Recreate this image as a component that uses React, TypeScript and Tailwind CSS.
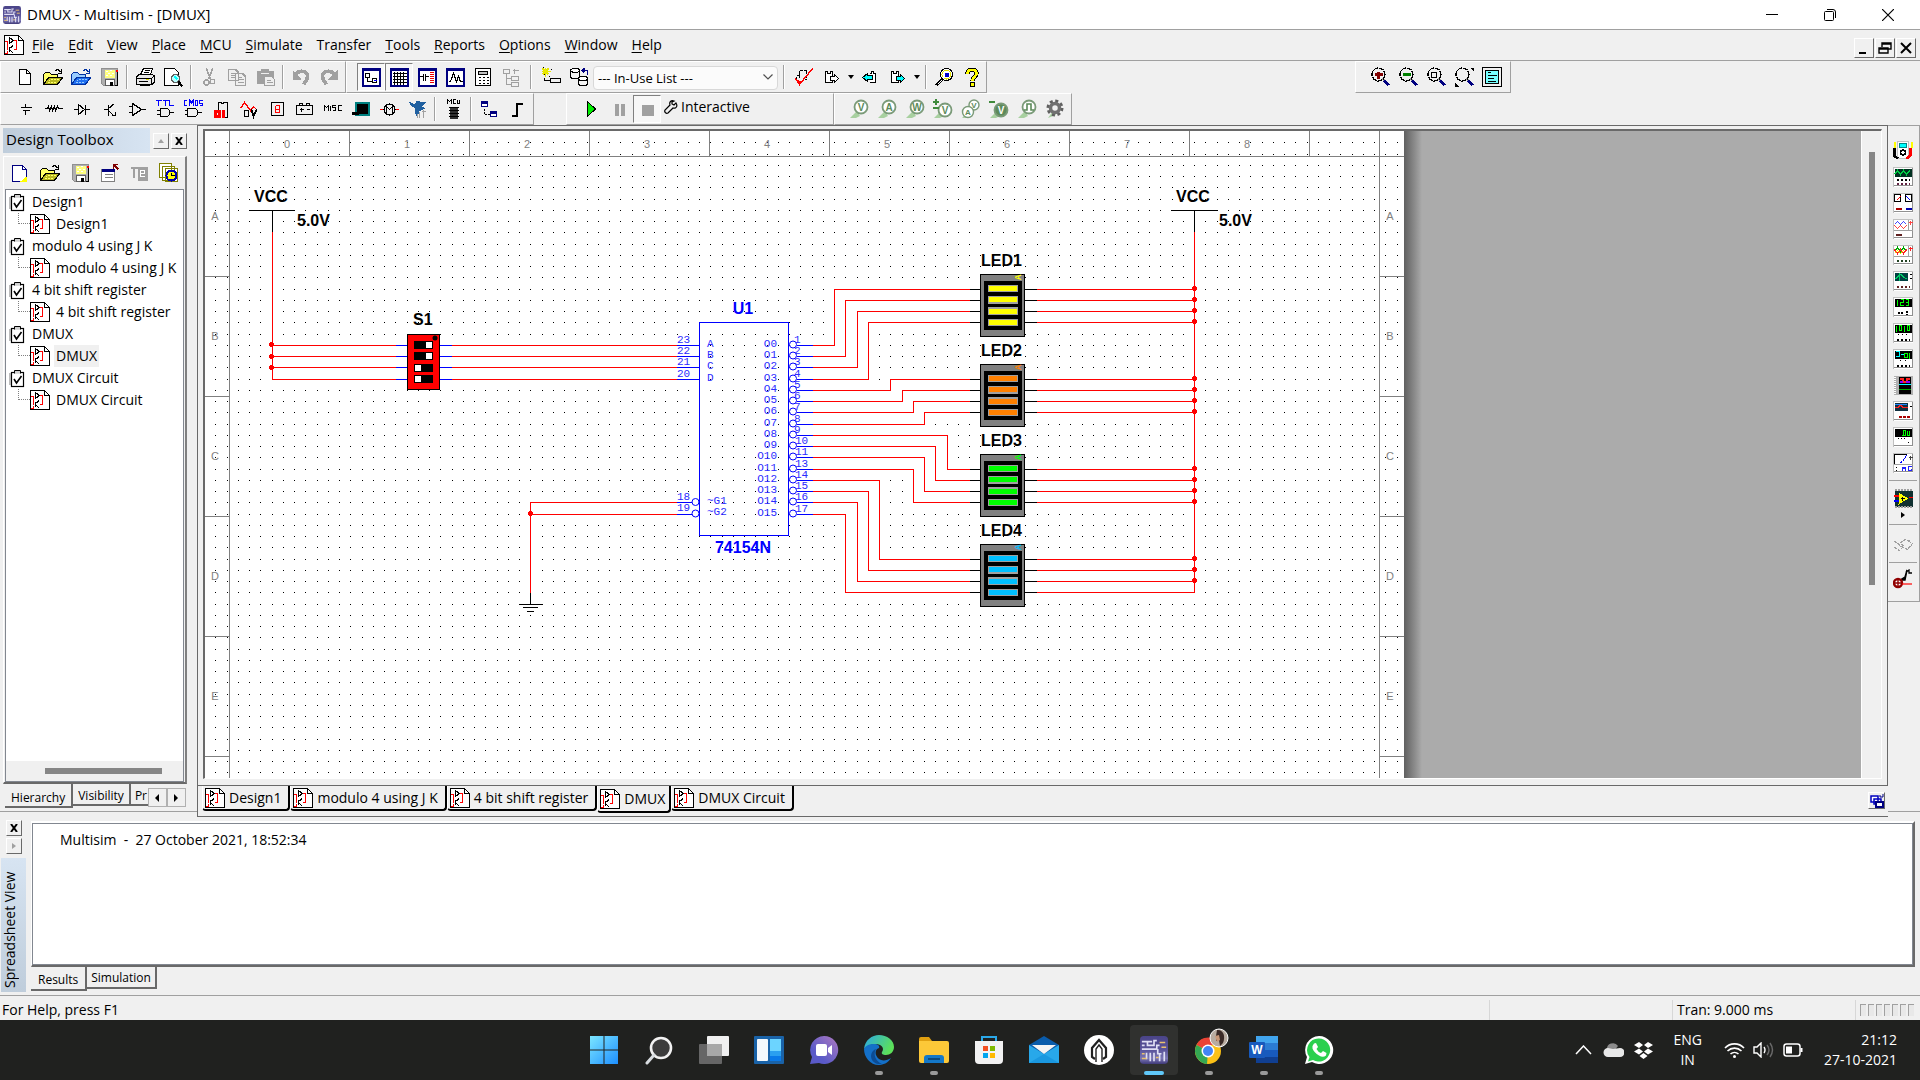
import React from "react";

type Kids = { children?: React.ReactNode };

/* ---------- small building blocks ---------- */

/* Strokes are shifted by half a unit so that thin lines fill whole pixels. */
function Ico({ children, smooth = false }: Kids & { smooth?: boolean }) {
  return (
    <svg
      width="20"
      height="20"
      viewBox="0 0 20 20"
      fill="none"
      aria-hidden="true"
      shapeRendering={smooth ? "auto" : "crispEdges"}
      className="shrink-0"
    >
      {smooth ? children : <g transform="translate(0.5 0.5)">{children}</g>}
    </svg>
  );
}

function Tool({ label, children, pressed = false }: Kids & { label: string; pressed?: boolean }) {
  return (
    <button
      type="button"
      aria-label={label}
      className={
        pressed
          ? "flex h-7 w-7 shrink-0 items-center justify-center border border-t-[#808080] border-l-[#808080] border-r-white border-b-white bg-[#f7f7f7]"
          : "flex h-7 w-7 shrink-0 items-center justify-center"
      }
    >
      {children}
    </button>
  );
}

function Sep({ wide = false }: { wide?: boolean }) {
  return (
    <span
      className={
        wide
          ? "mx-[5px] h-6 w-[2px] shrink-0 border-r border-l border-r-white border-l-[#a0a0a0]"
          : "mx-[3px] h-6 w-[2px] shrink-0 border-r border-l border-r-white border-l-[#a0a0a0]"
      }
    />
  );
}

function Bar({ children, label, className }: Kids & { label: string; className: string }) {
  return (
    <div
      role="toolbar"
      aria-label={label}
      className={`flex h-8 shrink-0 items-center border border-t-white border-r-[#a0a0a0] border-b-[#a0a0a0] border-l-white ${className}`}
    >
      {children}
    </div>
  );
}

/* ---------- icons ---------- */

const SheetIcon = () => (
  <Ico>
    <path d="M0 0h14l5 5v14H0z" fill="#fff" stroke="#000" />
    <path d="M14 0v5h5" stroke="#000" />
    <path d="M0 6h3v8M0 18h3v-3M8 5h4v9H9" stroke="#f00" strokeWidth="1.4" />
    <path d="M5 2v6l4-3zM5 11v5M5 13l4-3M5 14l4 4" stroke="#000" strokeWidth="1.2" />
  </Ico>
);

const ClipIcon = () => (
  <svg width="16" height="19" viewBox="0 0 16 19" fill="none" aria-hidden="true" className="shrink-0">
    <rect x="2.5" y="3.5" width="12" height="14" fill="#fff" stroke="#000" strokeWidth="1.2" />
    <path d="M1 4v12" stroke="#a0a0a0" strokeWidth="1.4" />
    <path d="M5.5 4.500V1.500h6v3" fill="#d0d0d0" stroke="#000" />
    <path d="M5 10l2.500 4 5-7" stroke="#000" strokeWidth="1.6" />
  </svg>
);

const NewIcon = () => (
  <Ico>
    <path d="M4 2h7l4 4v11H4z" fill="#fff" stroke="#000" strokeWidth="1.2" />
    <path d="M11 2v4h4" stroke="#000" strokeWidth="1.2" />
  </Ico>
);
const OpenIcon = ({ a = "#ffff66", b = "#b8b820", line = "#000" }: { a?: string; b?: string; line?: string }) => (
  <Ico>
    <path d="M0 17V7l2-2h4l2 2h6v3" fill={a} stroke={line} strokeWidth="1.2" />
    <path d="M0 17l5-7h14l-5 7z" fill={b} stroke={line} strokeWidth="1.2" />
    <path d="M5 14l2-2h9M4 15h9" stroke={a} strokeDasharray="2 1" />
    <path d="M11 4c2-3 5-2 6 1M18 1v5h-4" stroke={line} strokeWidth="1.2" />
  </Ico>
);
const SaveIcon = () => (
  <Ico>
    <path d="M2 1h16v17H4l-2-2z" fill="#b0b0b0" stroke="#909090" />
    <path d="M18 3v15H5" stroke="#000" strokeWidth="1.4" />
    <rect x="5" y="2" width="10" height="8" fill="#ffff80" />
    <path d="M6 4h2M10 3h2M8 6h2M12 6h2M6 8h2M10 8h2" stroke="#fff" strokeWidth="1.4" />
    <rect x="6" y="12" width="9" height="6" fill="#fff" stroke="#606060" />
    <rect x="10" y="14" width="3" height="4" fill="#000" />
    <rect x="16" y="2" width="2" height="2" fill="#f00" />
  </Ico>
);
const PrintIcon = () => (
  <Ico>
    <path d="M5 7l3-6h9l-2 6z" fill="#fff" stroke="#000" strokeWidth="1.2" />
    <path d="M9 3h5M8 5h5" stroke="#000" />
    <path d="M1 9l3-2h13l2 2v6l-3 2H1z" fill="#e8e8e8" stroke="#000" strokeWidth="1.3" />
    <path d="M1 11h15v6M16 11l3-3M3 14h9" stroke="#000" strokeWidth="1.2" />
    <path d="M4 18h10l2-2" stroke="#000" strokeWidth="1.4" />
    <path d="M10 12h3" stroke="#e0e000" strokeWidth="1.6" />
  </Ico>
);
const PreviewIcon = () => (
  <Ico>
    <path d="M1 1h10l4 4v13H1z" fill="#fff" stroke="#000" strokeWidth="1.2" />
    <circle cx="12" cy="11" r="4" fill="#bff" stroke="#606060" strokeWidth="1.4" />
    <path d="M11 9l3 3" stroke="#0ff" strokeWidth="1.5" />
    <path d="M15 14l4 5" stroke="#000" strokeWidth="2.2" />
  </Ico>
);
const CutIcon = () => (
  <Ico>
    <path d="M7 1l4 11M13 1L9 12" stroke="#a0a0a0" strokeWidth="1.6" />
    <circle cx="7" cy="15" r="2.5" stroke="#a0a0a0" strokeWidth="1.4" />
    <circle cx="13" cy="14" r="2.3" stroke="#a0a0a0" strokeWidth="1.4" />
  </Ico>
);
const CopyIcon = () => (
  <Ico>
    <path d="M1 2h7l3 3v8H1zM8 6h7l3 3v9H8z" fill="#efefef" stroke="#a0a0a0" strokeWidth="1.5" />
    <path d="M3 6h4M3 8h4M3 10h4M10 10h4M10 12h6M10 15h6" stroke="#a0a0a0" strokeWidth="1.2" />
  </Ico>
);
const PasteIcon = () => (
  <Ico>
    <path d="M1 3h17v13H1z" fill="#a0a0a0" />
    <path d="M6 4V2h6v2" stroke="#a0a0a0" strokeWidth="2" />
    <path d="M5 6h8" stroke="#efefef" strokeWidth="1.4" />
    <path d="M9 9h7l3 3v6H9z" fill="#efefef" stroke="#a0a0a0" strokeWidth="1.4" />
    <path d="M11 13h4M11 15h6" stroke="#a0a0a0" />
  </Ico>
);
const UndoIcon = () => (
  <Ico>
    <path d="M4 7c4-5 12-4 12 2 0 4-3 6-4 8" stroke="#a0a0a0" strokeWidth="3.6" />
    <path d="M1 2v10h9z" fill="#a0a0a0" />
  </Ico>
);
const RedoIcon = () => (
  <Ico>
    <path d="M15 7C11 2 3 3 3 9c0 4 3 6 4 8" stroke="#a0a0a0" strokeWidth="3.6" />
    <path d="M18 2v10H9z" fill="#a0a0a0" />
  </Ico>
);
const NavyWin = ({ children }: Kids) => (
  <Ico>
    <rect x="1" y="1" width="17" height="17" fill="#fff" stroke="#000080" strokeWidth="2" />
    <path d="M0 2h19" stroke="#000080" strokeWidth="3" />
    {children}
  </Ico>
);
const ListDesign = () => (
  <NavyWin>
    <path d="M4 6h4v4H4zM11 11h4v4h-4zM6 10v4h5" stroke="#000" strokeWidth="1.3" />
    <path d="M12 13h3" stroke="#00f" strokeWidth="1.4" />
  </NavyWin>
);
const GridWin = () => (
  <NavyWin>
    <path d="M3 6h14M3 9h14M3 12h14M3 15h14M5 4v13M8 4v13M11 4v13M14 4v13" stroke="#000" />
  </NavyWin>
);
const CapWin = () => (
  <NavyWin>
    <path d="M2 9h4M6 6v7M8 6v7M8 9h3" stroke="#000" strokeWidth="1.3" />
    <path d="M12 5h4M12 7h4M12 9h4M12 11h4M12 13h4M12 15h4" stroke="#e00" />
  </NavyWin>
);
const WaveWin = () => (
  <NavyWin>
    <path d="M3 14h2l3-8 3 8 2-5 2 5h2" stroke="#000" strokeWidth="1.2" />
  </NavyWin>
);
const CalcIcon = () => (
  <Ico>
    <path d="M2 1h15v17H2z" fill="#fff" stroke="#000" strokeWidth="1.6" />
    <path d="M5 4h9v3H5z" fill="#c0c0c0" stroke="#000" />
    <path d="M5 10h11M5 13h11M5 16h11" stroke="#000" strokeWidth="1.4" strokeDasharray="2 2" />
  </Ico>
);
const TreeGray = () => (
  <Ico>
    <path d="M2 2h6v4H2zM10 9h7v4h-7zM10 15h7v4h-7zM5 6v11h5M5 11h5M13 1v5M11 3h6" stroke="#a0a0a0" strokeWidth="1.5" />
  </Ico>
);
const CompWizard = () => (
  <Ico>
    <path d="M4 0v9M0 4h9M1 1l6 6M7 1L1 7" stroke="#e8e800" strokeWidth="1.6" />
    <path d="M3 10v3h5M9 11h10v4H9z" stroke="#000" strokeWidth="1.4" />
    <path d="M2 7h1M7 9h1M9 2h1M1 0h1" stroke="#000" />
  </Ico>
);
const DbIcon = () => (
  <Ico>
    <path d="M1 3v6c0 3 9 3 9 0V3" fill="#f4f4f4" stroke="#000" strokeWidth="1.2" />
    <ellipse cx="5.5" cy="3" rx="4.5" ry="2" fill="#fff" stroke="#000" strokeWidth="1.2" />
    <path d="M9 11v5c0 3 9 3 9 0v-5" fill="#f4f4f4" stroke="#000" strokeWidth="1.2" />
    <ellipse cx="13.5" cy="11" rx="4.5" ry="2" fill="#fff" stroke="#000" strokeWidth="1.2" />
    <path d="M13 3h5v4M15 1l-2 2 2 2" stroke="#000080" strokeWidth="1.5" />
  </Ico>
);
const ErcIcon = () => (
  <Ico>
    <path d="M2 12V8h3V3h8M5 3v7M12 3v9H9" stroke="#000" strokeWidth="1.3" strokeDasharray="3 1" />
    <path d="M1 11l4 6L18 1" stroke="#f00" strokeWidth="1.4" />
    <path d="M2 12l3 6 4-5-3 1z" fill="#f00" />
  </Ico>
);
const FwdIcon = ({ c = "#fff", flip = false }: { c?: string; flip?: boolean }) => (
  <Ico>
    {flip ? (
      <>
        <path d="M9 6h2V4h2v2h2v9H9" fill="#fff" stroke="#000" strokeWidth="1.2" />
        <path d="M2 10l5-4v2h5v4H7v2z" fill={c} stroke="#000" strokeWidth="1.2" />
      </>
    ) : (
      <>
        <path d="M3 4h2v2h3V4h2v11H3z" fill="#fff" stroke="#000" strokeWidth="1.2" />
        <path d="M16 11l-4-4v2H8v4h4v2z" fill={c} stroke="#000" strokeWidth="1.2" />
      </>
    )}
  </Ico>
);
const Caret = () => (
  <svg width="7" height="4" viewBox="0 0 7 4" aria-hidden="true">
    <path d="M0 0h6L3 4z" fill="#000" />
  </svg>
);
const FindIcon = () => (
  <Ico>
    <circle cx="12" cy="7" r="6" fill="#fff" stroke="#000" strokeWidth="1.2" />
    <circle cx="12" cy="7" r="4.5" stroke="#e0e000" />
    <path d="M10 5h4v4h-4z" fill="#00c" />
    <path d="M8 11l-6 7" stroke="#000" strokeWidth="3" />
    <path d="M7 13l-4 4" stroke="#fff" />
  </Ico>
);
const HelpIcon = () => (
  <Ico>
    <path d="M5 6c0-5 9-5 9 0 0 3-4 4-4 7" stroke="#000" strokeWidth="4.5" />
    <path d="M5 6c0-5 9-5 9 0 0 3-4 4-4 7" stroke="#ff0" strokeWidth="2.6" />
    <rect x="8" y="15" width="4" height="4" fill="#ff0" stroke="#000" />
  </Ico>
);

const K = "#000";
const parts: { name: string; icon: React.ReactNode }[] = [
  { name: "Source", icon: <path d="M10 4v4M5 8h11M7 11h7M10 11v4" stroke={K} strokeWidth="1.2" /> },
  { name: "Basic", icon: <path d="M1 9h3l1-2 1 4 2-4 1 4 2-4 1 4 2-4 1 2h4" stroke={K} /> },
  { name: "Diode", icon: <path d="M2 10h5M14 10h4M7 5v10l6-5zM14 5v10" stroke={K} strokeWidth="1.2" /> },
  { name: "Transistor", icon: <path d="M4 10h5M9 5v11M9 9l6-5M9 11l6 6M12 16h4v-4" stroke={K} strokeWidth="1.2" /> },
  { name: "Analog", icon: <path d="M5 4v12l9-6zM1 7h4M1 13h4M14 10h4" stroke={K} strokeWidth="1.2" /> },
  {
    name: "TTL",
    icon: (
      <>
        <path d="M0 1h6M3 1v5M7 1h6M10 1v5M14 0v6h4" stroke="#00f" strokeWidth="1.8" />
        <path d="M5 9v8h6c4 0 4-8 0-8zM1 11h4M1 15h4M14 13h4" stroke={K} strokeWidth="1.2" />
      </>
    ),
  },
  {
    name: "CMOS",
    icon: (
      <>
        <path d="M3 1H1v5h2M6 6V1l2 2 2-2v5M12 1h2v5h-2zM19 1h-3v3h3v2h-3" stroke="#00f" strokeWidth="1.6" />
        <path d="M4 9v8h7c4 0 4-8 0-8zM1 11h3M1 15h3M14 13h4" stroke={K} strokeWidth="1.2" />
      </>
    ),
  },
  {
    name: "Misc Digital",
    icon: (
      <>
        <path d="M7 10V3h3v1h2V3h4v15h-4" stroke={K} strokeWidth="1.2" />
        <path d="M4 12h4v5H4zM12 10v8" stroke="#f00" strokeWidth="2.6" />
      </>
    ),
  },
  {
    name: "Mixed",
    icon: (
      <>
        <path d="M1 9l4-6 6 8 3-4 4 4" stroke="#f00" strokeWidth="1.3" />
        <path d="M5 11h4v6H5zM12 10l2 7 3-7" stroke={K} strokeWidth="1.8" />
      </>
    ),
  },
  {
    name: "Indicator",
    icon: (
      <>
        <rect x="4" y="3" width="12" height="13" stroke={K} strokeWidth="1.2" />
        <path d="M8 6h4v7H8M8 6v7M8 10h4" stroke="#f00" strokeWidth="1.5" />
      </>
    ),
  },
  { name: "Power", icon: <path d="M1 6h16v9H1zM4 6V4h3v2M11 6V4h3v2M4 10h4M6 8v4M11 10h3" stroke={K} strokeWidth="1.2" /> },
  {
    name: "Misc",
    icon: <path d="M1 11V6l2 2 2-2v5M7 6v5M12 6H9v2h3v3H9M18 6h-3v5h3" stroke={K} />,
  },
  {
    name: "Advanced Peripherals",
    icon: (
      <>
        <rect x="4" y="3" width="13" height="12" fill="#000" stroke="#008080" strokeWidth="2" />
        <path d="M0 14h7" stroke={K} strokeWidth="3" />
      </>
    ),
  },
  {
    name: "Electromechanical",
    icon: (
      <>
        <path d="M0 10h4M16 10h4" stroke="#f00" strokeWidth="1.4" />
        <circle cx="10" cy="10" r="5.5" stroke={K} strokeWidth="1.2" />
        <path d="M7 13V7l3 3 3-3v6" stroke={K} strokeWidth="1.2" />
      </>
    ),
  },
  {
    name: "NI Component",
    icon: (
      <>
        <path d="M1 2l6 3 2-4 3 1h7l-4 5 2 2-5 3-2 6-3-5 1-4-5-3z" fill="#2060a0" />
        <path d="M12 12v6M14 12h4M16 10v8M10 18v-4" stroke="#a0a0a0" strokeWidth="1.5" />
      </>
    ),
  },
];

const probes = ["V", "A", "W", "±", "AV", "−", "π"];

function ProbeIcon({ kind }: { kind: string }) {
  const dark = kind === "−";
  const low = kind === "±" || dark;
  const letter = low ? "V" : kind;
  return (
    <Ico smooth>
      <path d="M1 19l7-7 3 5-4 2z" fill="#a8d0a0" />
      {kind === "AV" ? (
        <>
          <circle cx="13" cy="6" r="5" fill="#fff" stroke="#7a9a78" strokeWidth="1.4" />
          <text x="13" y="9" fontSize="8" fontWeight="bold" textAnchor="middle" fill="#5c8a5a" fontFamily="Liberation Sans">V</text>
          <circle cx="7" cy="13" r="5.5" fill="#fff" stroke="#7a9a78" strokeWidth="1.4" />
          <text x="7" y="16" fontSize="8" fontWeight="bold" textAnchor="middle" fill="#5c8a5a" fontFamily="Liberation Sans">A</text>
        </>
      ) : (
        <>
          <circle cx="12" cy={low ? 11 : 8} r="6.5" fill={dark ? "#5c8a5a" : "#fff"} stroke="#7a9a78" strokeWidth="1.8" />
          {kind === "π" ? (
            <path d="M7 11h3V5h4v6h3" stroke="#5c8a5a" strokeWidth="1.6" />
          ) : (
            <text x="12" y={low ? 15 : 12} fontSize="10" fontWeight="bold" textAnchor="middle" fill={dark ? "#fff" : "#5c8a5a"} fontFamily="Liberation Sans">
              {letter}
            </text>
          )}
          {kind === "±" && <path d="M3 0v6M0 3h6M0 9h6" stroke="#3f8a3c" strokeWidth="2" />}
          {dark && <path d="M0 3h6" stroke="#3f8a3c" strokeWidth="2" />}
        </>
      )}
    </Ico>
  );
}

function ZoomIcon({ kind }: { kind: "in" | "out" | "area" | "fit" }) {
  return (
    <Ico>
      <path d="M12 11l4 4" stroke="#a0a0a0" strokeWidth="2" />
      <circle cx="8" cy="7" r="6.5" stroke="#000" strokeWidth="1.3" strokeDasharray="5 1" />
      <path d="M14 13l4 5" stroke="#000080" strokeWidth="3" />
      {kind === "in" && <path d="M8 4v7M4 7h8" stroke="#800000" strokeWidth="3" />}
      {kind === "out" && <path d="M4 7h8" stroke="#008000" strokeWidth="3" />}
      {kind === "area" && <rect x="5" y="5" width="5" height="5" stroke="#000" strokeWidth="1.2" />}
      {kind === "fit" && <path d="M15 0h4v4zM0 15v4h4z" fill="#000" />}
    </Ico>
  );
}

/* ---------- top of the window ---------- */

const menus: [string, string, string][] = [
  ["", "F", "ile"],
  ["", "E", "dit"],
  ["", "V", "iew"],
  ["", "P", "lace"],
  ["", "M", "CU"],
  ["", "S", "imulate"],
  ["Tra", "n", "sfer"],
  ["", "T", "ools"],
  ["", "R", "eports"],
  ["", "O", "ptions"],
  ["", "W", "indow"],
  ["", "H", "elp"],
];

function MultisimLogo({ size }: { size: number }) {
  return (
    <svg width={size} height={size} viewBox="0 0 30 30" aria-hidden="true" className="shrink-0">
      <defs>
        <linearGradient id="logo-fill" x1="0" y1="0" x2="0" y2="1">
          <stop offset="0" stopColor="#4a4488" />
          <stop offset="0.5" stopColor="#5a549a" />
          <stop offset="0.8" stopColor="#7a76b4" />
          <stop offset="1" stopColor="#403a78" />
        </linearGradient>
      </defs>
      <rect width="30" height="30" rx="4" fill="url(#logo-fill)" />
      <path
        d="M2 6h11M8 6v4h7V5h3M2 14h16M18 14v-4h3M7 18v7M11 18v9M15 18v9M19 14v5h4M21 19v8M26 17v10M2 10h3"
        fill="none"
        stroke="#e0e0f4"
        strokeWidth="1.8"
      />
      <path d="M21 7h6M23 12h5M2 19h3M2 24h5M17 23h3" fill="none" stroke="#e8c070" strokeWidth="1.6" />
    </svg>
  );
}

function TitleBar() {
  return (
    <header className="flex h-[30px] shrink-0 items-center border-b border-[#a0a0a0] bg-white pr-[26px] pl-[3px]">
      <MultisimLogo size={18} />
      <h1 className="ml-1.5 flex-1 pb-0.5 text-[15px] leading-5">DMUX - Multisim - [DMUX]</h1>
      <div className="flex items-center gap-[46px]">
        <button type="button" aria-label="Minimize" className="h-3 w-3">
          <svg width="12" height="12" viewBox="0 0 12 12"><path d="M0 5.500h12" stroke="#000" /></svg>
        </button>
        <button type="button" aria-label="Restore" className="h-3 w-3">
          <svg width="12" height="12" viewBox="0 0 12 12" fill="none">
            <rect x="0.5" y="2.5" width="9" height="9" rx="1" stroke="#000" />
            <path d="M3 .5h6q2.500 0 2.500 2.500v6" stroke="#000" />
          </svg>
        </button>
        <button type="button" aria-label="Close" className="h-3 w-3">
          <svg width="12" height="12" viewBox="0 0 12 12"><path d="M0 0l12 12M12 0L0 12" stroke="#000" strokeWidth="1.2" /></svg>
        </button>
      </div>
    </header>
  );
}

function MdiButton({ label, children }: Kids & { label: string }) {
  return (
    <button
      type="button"
      aria-label={label}
      className="flex h-5 w-5 items-center justify-center border border-t-white border-r-[#696969] border-b-[#696969] border-l-white bg-[#f0f0f0]"
    >
      <svg width="14" height="14" viewBox="0 0 14 14" fill="none" aria-hidden="true">{children}</svg>
    </button>
  );
}

function MenuBar() {
  return (
    <nav className="flex h-[31px] shrink-0 items-center border-b border-[#a0a0a0] pr-1 pl-1" aria-label="Main menu">
      <SheetIcon />
      <ul className="ml-px flex flex-1 pb-0.5">
        {menus.map(([a, u, b]) => (
          <li key={a + u + b}>
            <button type="button" className="px-[7px] text-sm leading-5">
              {a}
              <span className="underline underline-offset-2">{u}</span>
              {b}
            </button>
          </li>
        ))}
      </ul>
      <div className="flex gap-px pt-[5px]">
        <MdiButton label="Minimize document"><path d="M2 12h7" stroke="#000" strokeWidth="2" /></MdiButton>
        <MdiButton label="Restore document">
          <path d="M4 6V2h9v6h-3M4 3h9M1 7h9v5H1zM1 8h9" stroke="#000" strokeWidth="1.4" />
        </MdiButton>
        <MdiButton label="Close document"><path d="M2 2l10 10M12 2L2 12" stroke="#000" strokeWidth="2" /></MdiButton>
      </div>
    </nav>
  );
}

function ToolbarRowOne() {
  return (
    <div className="flex h-8 shrink-0">
      <Bar label="Standard" className="pl-2.5 pr-0.5">
        <Tool label="New"><NewIcon /></Tool>
        <Tool label="Open"><OpenIcon /></Tool>
        <Tool label="Open sample"><OpenIcon a="#9cf" b="#2070f0" line="#0030a0" /></Tool>
        <Tool label="Save"><SaveIcon /></Tool>
        <Sep />
        <Tool label="Print"><PrintIcon /></Tool>
        <Tool label="Print preview"><PreviewIcon /></Tool>
        <Sep />
        <Tool label="Cut"><CutIcon /></Tool>
        <Tool label="Copy"><CopyIcon /></Tool>
        <Tool label="Paste"><PasteIcon /></Tool>
        <Sep />
        <Tool label="Undo"><UndoIcon /></Tool>
        <Tool label="Redo"><RedoIcon /></Tool>
      </Bar>
      <Bar label="Main" className="pl-2.5">
        <Tool label="Design toolbox" pressed><ListDesign /></Tool>
        <Tool label="Spreadsheet view" pressed><GridWin /></Tool>
        <Tool label="SPICE netlist viewer"><CapWin /></Tool>
        <Tool label="Grapher"><WaveWin /></Tool>
        <Tool label="Postprocessor"><CalcIcon /></Tool>
        <Tool label="Parent sheet"><TreeGray /></Tool>
        <Sep wide />
        <Tool label="Component wizard"><CompWizard /></Tool>
        <Tool label="Database manager"><DbIcon /></Tool>
        <div className="relative">
          <select aria-label="In-use list" className="h-6 w-[185px] appearance-none rounded-sm border border-[#d8d8d8] bg-[#fbfbfb] pl-1 text-[13px] leading-5">
            <option>--- In-Use List ---</option>
          </select>
          <svg width="10" height="6" viewBox="0 0 10 6" className="pointer-events-none absolute top-[9px] right-[5px]" fill="none">
            <path d="M0.500 .5L5 5l4.500-4.500" stroke="#505050" strokeWidth="1.2" />
          </svg>
        </div>
        <Sep wide />
        <Tool label="Electrical rules check"><ErcIcon /></Tool>
        <Tool label="Transfer to board"><FwdIcon /></Tool>
        <button type="button" aria-label="Transfer options" className="flex w-2.5 justify-center"><Caret /></button>
        <Tool label="Back annotate"><FwdIcon c="#0ff" flip /></Tool>
        <Tool label="Forward annotate"><FwdIcon c="#0ff" /></Tool>
        <button type="button" aria-label="Annotate options" className="flex w-2.5 justify-center"><Caret /></button>
        <Sep />
        <Tool label="Find examples"><FindIcon /></Tool>
        <Tool label="Help"><HelpIcon /></Tool>
      </Bar>
      <div className="min-w-0 flex-1" />
      <Bar label="View" className="mr-[409px] pr-1 pl-2.5">
        <Tool label="Zoom in"><ZoomIcon kind="in" /></Tool>
        <Tool label="Zoom out"><ZoomIcon kind="out" /></Tool>
        <Tool label="Zoom area"><ZoomIcon kind="area" /></Tool>
        <Tool label="Zoom to fit"><ZoomIcon kind="fit" /></Tool>
        <Tool label="Full screen">
          <Ico>
            <rect x="0" y="0" width="19" height="19" fill="#f0f0f0" stroke="#000" strokeWidth="1.2" />
            <rect x="3" y="3" width="13" height="13" fill="#7ff" stroke="#000" strokeWidth="1.2" />
            <path d="M5 5h3M5 8h9M5 11h6M5 14h8" stroke="#000" />
          </Ico>
        </Tool>
      </Bar>
    </div>
  );
}

function ToolbarRowTwo() {
  return (
    <div className="flex h-8 shrink-0">
      <Bar label="Components" className="pl-2.5 pr-0.5">
        {parts.map((p) => (
          <Tool key={p.name} label={p.name}><Ico>{p.icon}</Ico></Tool>
        ))}
        <Sep />
        <Tool label="MCU">
          <Ico>
            <path d="M4 0v4M4 0l2 2 2-2v4M12 0h-2v4h2M14 0v4h2V0" stroke="#000" />
            <rect x="6" y="7" width="8" height="12" fill="#303030" />
            <path d="M5 8h10M5 11h10M5 14h10M5 17h10" stroke="#000" strokeWidth="1.3" />
          </Ico>
        </Tool>
        <Sep />
        <Tool label="Hierarchical block">
          <Ico>
            <path d="M2 2h6v5H2zM11 12h6v5h-6z" fill="#fff" stroke="#000080" strokeWidth="1.3" />
            <path d="M2 3h6M11 13h6" stroke="#000080" strokeWidth="2.4" />
            <path d="M5 9v6h5" stroke="#000" strokeWidth="1.4" strokeDasharray="2 1" />
          </Ico>
        </Tool>
        <Tool label="Bus"><Ico><path d="M4 16h5V4h6" stroke="#000" strokeWidth="2" /></Ico></Tool>
      </Bar>
      <Bar label="Simulation" className="ml-8 w-[268px] pl-2.5">
        <Tool label="Run"><Ico><path d="M6 2v15l8-7.500z" fill="#0e0" stroke="#000" strokeWidth="1" /></Ico></Tool>
        <Tool label="Pause"><Ico><path d="M5 4h4v12H5zM11 4h4v12h-4z" fill="#a0a0a0" /></Ico></Tool>
        <Tool label="Stop" pressed><Ico><rect x="4" y="5" width="12" height="11" fill="#a0a0a0" /></Ico></Tool>
        <button type="button" className="ml-[3px] flex items-center gap-[3px] pb-1 text-sm leading-5">
          <svg width="14" height="14" viewBox="0 0 14 14" fill="none" aria-hidden="true">
            <path d="M12 3l-2 2-2-1V2l2-1C7 0 5 2 6 5L1 10c-1 2 1 4 3 3l5-5c3 1 5-2 3-5z" stroke="#000" strokeWidth="1.2" />
          </svg>
          Interactive
        </button>
      </Bar>
      <Bar label="Probes" className="pr-0.5 pl-2.5">
        {probes.map((k) => (
          <Tool key={k} label={`Probe ${k}`}><ProbeIcon kind={k} /></Tool>
        ))}
        <Tool label="Probe settings">
          <Ico smooth>
            <path d="M3 19l5-7 3 4z" fill="#a8d0a0" />
            <circle cx="10" cy="9" r="7" stroke="#606060" strokeWidth="3" strokeDasharray="3 2.5" />
            <circle cx="10" cy="9" r="4.5" stroke="#707070" strokeWidth="3.5" />
          </Ico>
        </Tool>
      </Bar>
    </div>
  );
}

/* ---------- design toolbox ---------- */

const designs = ["Design1", "modulo 4 using J K", "4 bit shift register", "DMUX", "DMUX Circuit"];

function TinyButton({ label, children }: Kids & { label: string }) {
  return (
    <button
      type="button"
      aria-label={label}
      className="flex h-4 w-4 shrink-0 items-center justify-center border border-t-white border-r-[#696969] border-b-[#696969] border-l-white bg-[#f0f0f0]"
    >
      {children}
    </button>
  );
}

const CrossMark = () => (
  <svg width="8" height="8" viewBox="0 0 8 8" aria-hidden="true"><path d="M1 0l6 8M7 0L1 8" stroke="#000" strokeWidth="2" /></svg>
);

function DesignToolbox() {
  return (
    <aside className="mb-[5px] flex w-[197px] shrink-0 flex-col border-b border-[#a0a0a0] pt-[3px] pr-[10px] pl-[3px]">
      <div className="flex items-center gap-0.5">
        <h2 className="mr-px h-[25px] w-[147px] bg-linear-to-r from-[#bfcddb] to-[#d7e4f2] pl-[3px] text-[15px] leading-[23px]">Design Toolbox</h2>
        <TinyButton label="Pin"><svg width="6" height="4" viewBox="0 0 6 4"><path d="M0 4h6L3 0z" fill="#a0a0a0" /></svg></TinyButton>
        <TinyButton label="Close toolbox"><CrossMark /></TinyButton>
      </div>
      <div className="mt-[3px] flex flex-1 flex-col border-t border-r-2 border-b-2 border-l border-t-white border-r-[#808080] border-b-[#696969] border-l-white">
        <div className="flex h-8 items-center justify-between px-1.5">
          <button type="button" aria-label="New design">
            <Ico>
              <path d="M2 2h10l4 4v12H2z" fill="#fff" stroke="#000080" strokeWidth="1.2" />
              <path d="M12 2v4h4" stroke="#000080" /><path d="M10 18h6v-5z" fill="#ff0" />
            </Ico>
          </button>
          <button type="button" aria-label="Open design"><OpenIcon /></button>
          <button type="button" aria-label="Save design"><SaveIcon /></button>
          <button type="button" aria-label="Close design">
            <Ico>
              <rect x="2" y="6" width="13" height="12" fill="#fff" stroke="#808080" />
              <path d="M2 7h13" stroke="#000080" strokeWidth="3" />
              <path d="M5 11h8M5 14h8" stroke="#808080" />
              <path d="M14 1h4M14 1v4M14 1l5 5" stroke="#800000" strokeWidth="1.5" />
            </Ico>
          </button>
          <button type="button" aria-label="Rename">
            <Ico>
              <path d="M1 4h7M4 4v10" stroke="#a0a0a0" strokeWidth="2" />
              <rect x="8" y="3" width="10" height="14" fill="#a0a0a0" />
              <path d="M10 10h5V7h-4v6h4" stroke="#fff" />
            </Ico>
          </button>
          <button type="button" aria-label="Version history">
            <Ico>
              <path d="M0 0h12v14H0zM3 3h12v14H3zM6 5h12v13H6z" fill="#fff" stroke="#808000" strokeWidth="1.2" />
              <circle cx="12" cy="12" r="5" fill="#ff0" stroke="#00a" strokeWidth="2" />
              <path d="M12 9v3h3" stroke="#000" strokeWidth="1.2" />
            </Ico>
          </button>
        </div>
        <div className="mx-px flex flex-1 flex-col border border-[#828790] bg-white">
          <ul className="flex-1 overflow-hidden pt-px text-sm leading-[22px] whitespace-nowrap">
            {designs.map((d) => (
              <li key={d}>
                <div className="flex h-[22px] items-center gap-[7px] pl-[3px]"><ClipIcon />{d}</div>
                <div className="flex h-[22px] items-center pl-3">
                  <span className="-mt-[11px] h-[11px] w-3 shrink-0 border-b border-l border-dotted border-[#808080]" />
                  <SheetIcon />
                  <span className={d === "DMUX" ? "ml-1 bg-[#f0f0f0] px-0.5" : "ml-1 px-0.5"}>{d}</span>
                </div>
              </li>
            ))}
          </ul>
          <div className="h-5 bg-[#f0f0f0] pt-[7px] pl-[39px]"><div className="h-1.5 w-[117px] bg-[#868686]" /></div>
        </div>
      </div>
      <div className="flex h-[27px] items-start pl-0.5 text-xs leading-[18px]">
        <button type="button" className="h-6 border-r-2 border-b-2 border-[#696969] px-1.5 pt-[5px]">Hierarchy</button>
        <button type="button" className="h-[22px] border-r-2 border-b-2 border-[#696969] px-[5px] pt-[3px]">Visibility</button>
        <button type="button" className="h-[22px] w-[17px] overflow-hidden border-b-2 border-[#696969] pt-[3px] pl-1 text-left">Pr</button>
        <button type="button" aria-label="Scroll tabs left" className="mt-1 flex h-[19px] w-[19px] items-center justify-center border border-[#b0b0b0]">
          <svg width="4" height="8" viewBox="0 0 4 8"><path d="M4 0v8L0 4z" /></svg>
        </button>
        <button type="button" aria-label="Scroll tabs right" className="mt-1 flex h-[19px] w-[19px] items-center justify-center border border-[#b0b0b0]">
          <svg width="4" height="8" viewBox="0 0 4 8"><path d="M0 0v8l4-4z" /></svg>
        </button>
      </div>
    </aside>
  );
}

/* ---------- schematic ---------- */

/* The drawing uses window-like coordinates, so the view box starts at (205, 131). */
function dotPath() {
  let d = "";
  for (let i = 19; i < 125; i++) {
    for (let j = 12; j < 69; j++) {
      d += `M${Math.floor(2.1 + i * 11.25)} ${Math.floor(7.8 + j * 11.25)}h1v1h-1z`;
    }
  }
  return d;
}

const pinY = (n: number) => Math.floor(345.3 + n * 11.25);
const outPins = [1, 2, 3, 4, 5, 6, 7, 8, 9, 10, 11, 13, 14, 15, 16, 17];
const bendX = [834, 845, 857, 868, 890, 902, 913, 924, 947, 935, 924, 913, 879, 868, 857, 845];
const leds = [
  { name: "LED1", y: 274, color: "#ffff00" },
  { name: "LED2", y: 364, color: "#ff8000" },
  { name: "LED3", y: 454, color: "#00ff00" },
  { name: "LED4", y: 544, color: "#00bfff" },
];
const ledWire = [15, 26, 37, 48];
const cells = [
  [11, 7, 12],
  [22, 8, 23],
  [33, 8, 35],
  [45, 7, 46],
];

function Node({ x, y }: { x: number; y: number }) {
  return <path d={`M${x - 1} ${y - 3}h3v1h1v3h-1v1h-3v-1h-1v-3h1z`} fill="#f00" />;
}

function Vcc({ x }: { x: number }) {
  return (
    <g>
      <path d={`M${x - 23} 210.500h46M${x + 0.5} 210v22`} stroke="#000" />
      <text x={x - 18} y="202" fontSize="16" fontWeight="bold">VCC</text>
      <text x={x + 25} y="226" fontSize="16" fontWeight="bold">5.0V</text>
    </g>
  );
}

function Schematic() {
  const cols = Array.from({ length: 10 }, (_, i) => 229 + i * 120);
  const rows = Array.from({ length: 5 }, (_, i) => 276 + i * 120);
  return (
    <svg width="1199" height="647" viewBox="205 131 1199 647" fill="none" className="shrink-0 bg-white" fontFamily="'Liberation Sans', sans-serif" role="img" aria-label="Demultiplexer schematic">
      <path d={dotPath()} fill="#000" shapeRendering="crispEdges" />
      <g stroke="#808080" shapeRendering="crispEdges">
        <path d="M229.500 131v647M1379.500 131v647M205 156.500h1199" />
        {cols.map((x) => <path key={x} d={`M${x + 0.5} 131v25`} />)}
        {rows.map((y) => <path key={y} d={`M205 ${y + 0.5}h24M1379 ${y + 0.5}h25`} />)}
      </g>
      <g fill="#808080" fontSize="11" textAnchor="middle">
        {cols.slice(0, 9).map((x, i) => <text key={x} x={x + 58} y="148">{i}</text>)}
        {["A", "B", "C", "D", "E"].map((c, i) => (
          <React.Fragment key={c}>
            <text x="215" y={220 + i * 120}>{c}</text>
            <text x="1390" y={220 + i * 120}>{c}</text>
          </React.Fragment>
        ))}
      </g>

      <g shapeRendering="crispEdges">
        {[0, 1, 2, 3].map((i) => (
          <g key={i}>
            <path d={`M272 ${pinY(i) + 0.5}h124M452 ${pinY(i) + 0.5}h225`} stroke="#f00" />
            <path d={`M396 ${pinY(i) + 0.5}h11M440 ${pinY(i) + 0.5}h12M677 ${pinY(i) + 0.5}h22`} stroke="#00f" />
          </g>
        ))}
        <path d="M272.500 232v148M530.500 502v91M530 502.500h147M530 514.500h147M1194.500 232v361" stroke="#f00" />
        <path d="M677 502.500h15M677 514.500h15" stroke="#00f" />
        {outPins.map((p, i) => (
          <g key={p}>
            <path d={`M797 ${pinY(i) + 0.5}h16`} stroke="#00f" />
            <path d={`M813 ${pinY(i) + 0.5}H${bendX[i] + 0.5}V${leds[i >> 2].y + ledWire[i % 4] + 0.5}H970`} stroke="#f00" />
          </g>
        ))}
        {leds.map((l, n) =>
          ledWire.map((w, k) => (
            <g key={l.name + w}>
              <path d={`M970 ${l.y + w + 0.5}h10M1025 ${l.y + w + 0.5}h12`} stroke="#000" />
              <path d={`M1037 ${l.y + w + 0.5}h157`} stroke="#f00" />
              {!(n === 3 && k === 3) && <Node x={1194} y={l.y + w} />}
            </g>
          )),
        )}
        <Node x={271} y={345} />
        <Node x={271} y={357} />
        <Node x={271} y={368} />
        <Node x={530} y={514} />
        <path d="M530.500 593v11M519 604.500h24M523 607.500h15M527 611.500h7" stroke="#000" />
        <rect x="699.5" y="322.5" width="89" height="213" stroke="#00f" />
        <rect x="407.5" y="334.5" width="32" height="55" fill="#f00" stroke="#000" />
        {[341, 352, 364, 375].map((y, i) => (
          <g key={y}>
            <rect x="414" y={y} width="19" height="8" fill="#000" />
            <rect x={i < 2 ? 426 : 415} y={y + 1} width="6" height="6" fill="#fff" />
          </g>
        ))}
        {leds.map((l) => (
          <g key={l.name}>
            <rect x="980.5" y={l.y + 0.5} width="44" height="62" fill="#808080" stroke="#000" />
            <rect x="984" y={l.y + 7} width="38" height="49" fill="#000" />
            {cells.map(([y, h, c]) => (
              <g key={y}>
                <rect x="988" y={l.y + y} width="30" height={h} fill="#a0a0a0" />
                <rect x="989" y={l.y + c} width="28" height="5" fill={l.color} />
              </g>
            ))}
          </g>
        ))}
      </g>
      <circle cx="435" cy="338" r="2.5" fill="#000" />

      <g fill="#000">
        <Vcc x={272} />
        <Vcc x={1194} />
        <text x="413" y="325" fontSize="16" fontWeight="bold">S1</text>
        {leds.map((l) => (
          <React.Fragment key={l.name}>
            <text x="981" y={l.y - 8} fontSize="16" fontWeight="bold">{l.name}</text>
            <text transform={`translate(1021 ${l.y + 6}) rotate(-90)`} fontSize="9" fontWeight="bold" fill={l.color} fontFamily="'Liberation Mono', monospace">A</text>
          </React.Fragment>
        ))}
      </g>

      <g fill="#00f" fontSize="16" fontWeight="bold" textAnchor="middle">
        <text x="743" y="314">U1</text>
        <text x="743" y="553">74154N</text>
      </g>
      <g fill="#2a2aff" fontSize="11" fontFamily="'Liberation Mono', monospace">
        {["A", "B", "C", "D"].map((c, i) => (
          <React.Fragment key={c}>
            <text x="707" y={pinY(i) + 2}>{c}</text>
            <text x="677" y={pinY(i) - 2}>{23 - i}</text>
          </React.Fragment>
        ))}
        <text x="677" y="500">18</text>
        <text x="677" y="511">19</text>
        <text x="707" y="504">~G1</text>
        <text x="707" y="515">~G2</text>
        {outPins.map((p, i) => (
          <React.Fragment key={p}>
            <text x="777" y={pinY(i) + 2} textAnchor="end">{`O${i}`}</text>
            <text x={p < 10 ? 794 : 795} y={pinY(i) - 2}>{p}</text>
          </React.Fragment>
        ))}
      </g>
      <g fill="#fff" stroke="#00f">
        {outPins.map((p, i) => <circle key={p} cx="793" cy={pinY(i) - 0.5} r="3.5" />)}
        <circle cx="695.5" cy="502" r="3.5" />
        <circle cx="695.5" cy="513.5" r="3.5" />
      </g>
    </svg>
  );
}

function DocumentArea() {
  return (
    <main className="flex min-w-0 flex-1 flex-col border-l border-[#696969]">
      <div className="flex min-h-0 flex-1 border-t border-r border-b border-[#696969] pt-[3px] pr-[5px] pb-1.5 pl-[5px]">
        <div className="flex min-w-0 flex-1 border-t-2 border-r border-b border-l-2 border-t-[#696969] border-r-white border-b-white border-l-[#696969] bg-[#ababab]">
          <div className="min-w-0 flex-1 overflow-hidden">
            <div className="flex h-0 min-h-full">
              <Schematic />
              <div className="w-[18px] shrink-0 bg-linear-to-r from-[#606060] to-[#ababab]" />
            </div>
          </div>
          <div className="w-5 shrink-0 border-l border-white bg-[#f0f0f0] pt-[21px] pl-[7px]"><div className="h-[433px] w-1.5 bg-[#868686]" /></div>
        </div>
      </div>
      <div className="flex h-[31px] shrink-0 items-start border-b border-[#696969] pr-[3px] pl-1 text-sm">
        {designs.map((d) => (
          <button
            key={d}
            type="button"
            className={
              d === "DMUX"
                ? "flex h-[27px] items-center gap-1 rounded-b-sm border-r-2 border-b-2 border-l border-black border-l-white pr-1 pl-0.5 leading-5"
                : "flex h-[25px] items-center gap-1 rounded-b-sm border-r-2 border-b-2 border-l border-black border-l-white pr-[7px] pl-0.5 leading-5"
            }
          >
            <SheetIcon />
            {d}
          </button>
        ))}
        <div className="flex-1" />
        <button type="button" aria-label="Window list" className="mt-1.5 flex h-[17px] w-[17px] items-center justify-center border border-t-white border-r-[#696969] border-b-[#696969] border-l-white">
          <svg width="14" height="14" viewBox="0 0 14 14" fill="none" aria-hidden="true">
            <path d="M1 2h7v6H1zM4 5h7v5H4z" fill="#fff" stroke="#0000c0" strokeWidth="1.5" />
            <path d="M6 8h7v5H6z" fill="#fff" stroke="#000080" strokeWidth="2" />
            <path d="M10 1v2h3V0" stroke="#000080" />
          </svg>
        </button>
      </div>
    </main>
  );
}

/* ---------- instruments ---------- */

const Panel = ({ children, screen }: Kids & { screen: React.ReactNode }) => (
  <Ico>
    <path d="M0 0h19v19H0z" fill="#fff" />
    <path d="M0 19V0h19" stroke="#c0c0c0" />
    <path d="M19 0v18H0" stroke="#909090" />
    {screen}
    {children}
  </Ico>
);
const Leads = ({ c = "#000", y = 15 }: { c?: string; y?: number }) => (
  <path d={`M3 ${y}h13`} stroke={c} strokeWidth="2" strokeDasharray="2 2" />
);
const Screen = ({ w = 16, fill = "#000" }: { w?: number; fill?: string }) => <rect x="1" y="1" width={w} height="8" fill={fill} />;

const instruments: { name: string; icon: React.ReactNode }[] = [
  {
    name: "Multimeter",
    icon: (
      <Ico>
        <rect x="4" y="0" width="11" height="17" fill="#fff" stroke="#c0c0c0" />
        <rect x="6" y="2" width="7" height="4" fill="#0ff" stroke="#088" />
        <circle cx="9.5" cy="11" r="2.5" stroke="#000" strokeWidth="1.4" />
        <path d="M1 0v6" stroke="#ff0" strokeWidth="2" /><path d="M1 6v9l4 2" stroke="#000" strokeWidth="2.2" />
        <path d="M18 0v6" stroke="#ff0" strokeWidth="2" /><path d="M17 6v8l-4 3" stroke="#f00" strokeWidth="2.6" />
      </Ico>
    ),
  },
  { name: "Function generator", icon: <Panel screen={<><Screen w={17} fill="#003020" /><path d="M1 7l3-4 3 4 3-4 3 4 3-4" stroke="#0c4" strokeWidth="1.5" /></>}><Leads y={12} /><Leads y={16} c="#602040" /></Panel> },
  { name: "Wattmeter", icon: <Panel screen={<><path d="M1 1h6v7H1zM12 1h6v7h-6z" stroke="#000" strokeWidth="1.4" /><path d="M3 7l4-4" stroke="#f00" /><path d="M13 3l4 4" stroke="#00f" /></>}><path d="M2 15h6" stroke="#a00" strokeWidth="2" /><path d="M12 15h6" stroke="#00a" strokeWidth="2" /></Panel> },
  { name: "Oscilloscope", icon: <Panel screen={<><path d="M1 5l3-3 3 3 3-3 3 3" stroke="#44f" /><path d="M1 6l3 3 3-3 3 3 3-3M15 3h4M17 1v4" stroke="#f44" /><path d="M0 11h19M15 0v11" stroke="#a0a0a0" /></>}><path d="M2 15h6" stroke="#602020" strokeWidth="2" /></Panel> },
  { name: "Four channel oscilloscope", icon: <Panel screen={<><path d="M1 6l3-4 3 4 3-4 3 4" stroke="#0a0" strokeWidth="1.4" /><path d="M1 4l3 4 3-4 3 4 3-4M15 3h4M17 1v4" stroke="#f22" strokeWidth="1.4" /><path d="M1 8l3-3 3 3 3-3" stroke="#ee0" /><path d="M0 11h19M15 0v11" stroke="#a0a0a0" /></>}><Leads c="#204020" /></Panel> },
  { name: "Bode plotter", icon: <Panel screen={<><Screen w={13} fill="#004040" /><path d="M1 7c4 0 4-4 6-4s3 4 6 4M6 1v8" stroke="#0c6" strokeWidth="1.2" /><path d="M16 3h2M16 7h2" stroke="#000" strokeWidth="1.5" /></>}><Leads c="#602020" /></Panel> },
  { name: "Frequency counter", icon: <Panel screen={<><Screen w={17} /><path d="M4 2v6M7 2h3v3H7v3h3M12 2h3v6h-3M12 5h3" stroke="#0f0" /></>}><path d="M4 15h6M13 13v4" stroke="#000" strokeWidth="2" strokeDasharray="2 1" /></Panel> },
  { name: "Word generator", icon: <Panel screen={<><Screen w={17} /><path d="M3 2v6M6 2h2v5H6zM11 2v6M14 2h2v5h-2z" stroke="#0f0" /></>}><path d="M4 11h12" stroke="#000" strokeDasharray="1 3" /><Leads y={16} /></Panel> },
  { name: "Logic converter", icon: <Panel screen={<><Screen w={17} /><path d="M2 2h4v5H2M7 5h3" stroke="#0ff" strokeWidth="1.4" /><path d="M11 4h3v4h-3zM16 3v6" stroke="#0f0" /></>}><path d="M6 11h8" stroke="#000" strokeDasharray="1 4" /><Leads y={16} /></Panel> },
  { name: "Logic analyzer", icon: <Ico><rect x="0" y="0" width="19" height="19" fill="#b0b0b0" /><rect x="5" y="1" width="12" height="17" fill="#000" /><path d="M1 1v17" stroke="#fff" strokeWidth="2" strokeDasharray="1 1" /><path d="M6 3h3v3h4V3h3" stroke="#f22" strokeWidth="2" /><path d="M6 6h3M12 6h4" stroke="#80f" strokeWidth="2" /><path d="M5 9h12" stroke="#0ff" /><path d="M5 14h12" stroke="#0a0" /></Ico> },
  { name: "IV analyzer", icon: <Panel screen={<><Screen w={13} fill="#103040" /><path d="M1 6h3l3-2 3 2h4" stroke="#f22" strokeWidth="1.4" /><path d="M1 3h12" stroke="#28f" /><path d="M16 5h2" stroke="#000" strokeWidth="1.5" /></>}><path d="M5 15h11" stroke="#a00" strokeWidth="2" strokeDasharray="3 1" /></Panel> },
  { name: "Distortion analyzer", icon: <Panel screen={<><Screen w={17} /><path d="M8 8h1M10 3h2v5h-2zM14 3v5h2V3" stroke="#0f0" /></>}><path d="M4 11h9M15 14v3" stroke="#000" strokeWidth="1.2" strokeDasharray="1 2" /></Panel> },
  { name: "Network analyzer", icon: <Panel screen={<><path d="M1 10V1h12" stroke="#000" strokeWidth="1.4" /><path d="M7 9l2-1 4-6" stroke="#00f" /><path d="M15 4h4M17 2v4" stroke="#404040" /><path d="M0 11h19" stroke="#a0a0a0" /></>}><path d="M9 17v-3h3v3M9 15h3M18 13h-3v4h3v-2" stroke="#22f" /><path d="M3 13v4" stroke="#000" strokeDasharray="1 2" /></Panel> },
];

function Instruments() {
  return (
    <div className="mb-[5px] flex w-8 shrink-0 flex-col border-b border-[#a0a0a0]">
      <div role="toolbar" aria-label="Instruments" className="flex flex-col items-center border-t border-r border-b border-[#a0a0a0] pt-3 pr-0.5 pb-1.5">
        {instruments.map((i) => (
          <button key={i.name} type="button" aria-label={i.name} className="flex h-[26px] items-center">{i.icon}</button>
        ))}
        <hr className="my-1 w-7 border-[#a0a0a0]" />
        <button type="button" aria-label="LabVIEW instruments" className="flex h-[25px] items-center">
          <Ico>
            <rect x="1" y="2" width="18" height="16" fill="#103030" />
            <path d="M1 1h18M1 18h18" stroke="#a0a0a0" strokeWidth="2" strokeDasharray="2 1" />
            <path d="M0 7h5" stroke="#f00" strokeWidth="2" /><path d="M0 12h5" stroke="#00f" strokeWidth="2" />
            <path d="M5 4v12l10-6z" fill="#ff0" /><path d="M15 9h5" stroke="#f00" /><path d="M7 10h4M9 8v4" stroke="#000" />
          </Ico>
        </button>
        <button type="button" aria-label="More instruments" className="my-0.5 px-2">
          <svg width="4" height="6" viewBox="0 0 4 6"><path d="M0 0v6l4-3z" /></svg>
        </button>
        <hr className="mt-1 w-7 border-[#a0a0a0]" />
        <button type="button" aria-label="NI ELVIS" className="flex h-[37px] items-center">
          <Ico><path d="M1 13l5 3 4-4-3-4 5-3 6 2M8 12l6 3 5-6-5-3M4 9l4 3M1 7l4 2" stroke="#a0a0a0" strokeWidth="1.2" strokeDasharray="3 1" /></Ico>
        </button>
        <hr className="w-7 border-[#a0a0a0]" />
        <button type="button" aria-label="Current clamp" className="flex h-8 items-center">
          <Ico smooth>
            <path d="M7 11l5-3 2-7-2 10z" fill="#000" stroke="#000" strokeWidth="1.4" />
            <path d="M13 3l3-2v3h3" stroke="#000" strokeWidth="1.3" />
            <circle cx="5" cy="14" r="4" stroke="#900000" strokeWidth="2.4" fill="#fff" />
            <path d="M5 11v6M2 14h6" stroke="#900000" strokeWidth="1.4" /><path d="M9 15h10" stroke="#f00" strokeWidth="1.2" />
          </Ico>
        </button>
      </div>
    </div>
  );
}

/* ---------- spreadsheet view and status ---------- */

function SpreadsheetView() {
  return (
    <section aria-label="Spreadsheet view" className="flex h-[179px] shrink-0 border-b border-[#a0a0a0] pt-[3px] pr-[5px]">
      <div className="flex w-[31px] shrink-0 flex-col items-center gap-0.5 pr-1">
        <TinyButton label="Close spreadsheet view"><CrossMark /></TinyButton>
        <TinyButton label="Pin spreadsheet view"><svg width="4" height="6" viewBox="0 0 4 6"><path d="M0 0v6l4-3z" fill="#a0a0a0" /></svg></TinyButton>
        <div className="mt-0.5 h-[134px] w-[25px] bg-linear-to-b from-[#d7e4f2] to-[#bfcddb]">
          <h2 className="h-full w-full rotate-180 pt-1 text-sm leading-[18px] whitespace-nowrap [writing-mode:vertical-rl]">Spreadsheet View</h2>
        </div>
      </div>
      <div className="flex flex-1 flex-col pt-px">
        <div className="flex-1 border-t-2 border-r-2 border-b-2 border-l border-t-white border-r-[#696969] border-b-[#696969] border-l-white">
          <div className="h-full border border-[#828790] bg-white pt-1.5 pl-[27px] text-sm leading-5 whitespace-pre">{"Multisim  -  27 October 2021, 18:52:34"}</div>
        </div>
        <div className="flex h-7 items-start text-xs leading-[18px]">
          <button type="button" className="h-6 border-r-2 border-b-2 border-[#696969] px-[7px] pt-1">Results</button>
          <button type="button" className="h-[22px] border-r-2 border-b-2 border-[#696969] px-1 pt-0.5">Simulation</button>
        </div>
      </div>
    </section>
  );
}

function StatusBar() {
  return (
    <footer className="flex h-6 shrink-0 items-end text-sm leading-5">
      <span className="flex-1 pl-0.5">For Help, press F1</span>
      <span className="h-5 w-[183px] border-l border-[#d7d7d7]" />
      <span className="h-5 w-[183px] border-l border-[#d7d7d7] pl-1">Tran: 9.000 ms</span>
      <span className="flex h-5 w-[65px] items-center gap-0.5 border-l border-[#d7d7d7] pl-1">
        {[0, 1, 2, 3, 4, 5, 6].map((i) => (
          <span key={i} className="h-3 w-1.5 border-t border-l border-[#a0a0a0] bg-[#e8e8e8]" />
        ))}
      </span>
    </footer>
  );
}

/* ---------- taskbar ---------- */

const apps: { name: string; icon: React.ReactNode; open?: boolean; active?: boolean }[] = [
  {
    name: "Start",
    icon: (
      <>
        <defs><linearGradient id="start-fill" gradientUnits="userSpaceOnUse" x1="0" y1="0" x2="30" y2="30"><stop offset="0" stopColor="#7fe9ff" /><stop offset="1" stopColor="#1a8cff" /></linearGradient></defs>
        <path d="M1 1h13.500v13.500H1zM15.500 1H29v13.500H15.500zM1 15.500h13.500V29H1zM15.500 15.500H29V29H15.500z" fill="url(#start-fill)" />
      </>
    ),
  },
  {
    name: "Search",
    icon: (
      <>
        <circle cx="17" cy="13" r="10" fill="#3c3c3c" stroke="#f2f2f2" strokeWidth="2.6" />
        <path d="M10 20l-7 8" stroke="#d8dce0" strokeWidth="3" strokeLinecap="round" />
      </>
    ),
  },
  {
    name: "Task view",
    icon: (
      <>
        <rect x="8" y="1" width="22" height="20" rx="1" fill="#f0f0f0" />
        <rect x="0" y="9" width="23" height="20" rx="1" fill="#6c6c6c" opacity="0.92" />
        <rect x="8" y="9" width="15" height="12" fill="#a8a8a8" />
      </>
    ),
  },
  {
    name: "Widgets",
    icon: (
      <>
        <rect x="0" y="1" width="30" height="28" rx="1" fill="#1a63a8" />
        <rect x="3" y="4" width="11" height="22" rx="1" fill="#f4f8fc" />
        <rect x="16" y="4" width="11" height="12" fill="#6cd4ff" />
        <rect x="16" y="16" width="11" height="5" fill="#2aa0f0" />
        <rect x="16" y="21" width="11" height="5" fill="#0a7ae8" />
      </>
    ),
  },
  {
    name: "Chat",
    icon: (
      <>
        <defs><linearGradient id="chat-fill" x1="0" y1="1" x2="1" y2="0"><stop offset="0.3" stopColor="#5a5ac8" /><stop offset="1" stopColor="#b07ac0" /></linearGradient></defs>
        <path d="M15 1a14 14 0 1 1-5 27L1 29l2-7A14 14 0 0 1 15 1z" fill="url(#chat-fill)" />
        <rect x="7" y="9" width="11" height="12" rx="2" fill="#fff" />
        <path d="M19 13l4-3v10l-4-3z" fill="#fff" />
      </>
    ),
  },
  {
    name: "Edge",
    open: true,
    icon: (
      <>
        <defs><linearGradient id="edge-fill" x1="0" y1="0" x2="1" y2="0.4"><stop offset="0" stopColor="#2aa8e8" /><stop offset="1" stopColor="#5ce05a" /></linearGradient></defs>
        <path d="M0 14C1 5 8 0 15 0c8 0 15 5 15 12 0 5-4 8-8 8-3 0-5-1-4-3 3-4-1-8-6-8C6 9 2 12 0 14z" fill="url(#edge-fill)" />
        <path d="M0 14c2-4 6-5 10-5 4 0 6 2 5 4-3 1-4 4-3 7 2 6 9 7 15 3-3 5-8 7-12 7C6 30 0 22 0 14z" fill="#1470c8" />
        <path d="M12 14c-3 5-1 12 6 15-5 1-11-2-11-8 0-3 2-6 5-7z" fill="#0c4c94" />
      </>
    ),
  },
  {
    name: "File Explorer",
    open: true,
    icon: (
      <>
        <path d="M0 4q0-2 2-2h8l3 4H0z" fill="#e0a010" />
        <path d="M0 6h28q2 0 2 2v18q0 2-2 2H2q-2 0-2-2z" fill="#fcc838" />
        <path d="M5 28v-5q0-3 3-3h14q3 0 3 3v5z" fill="#1478c8" />
        <path d="M9 24h12" stroke="#0a4a80" strokeWidth="2" />
      </>
    ),
  },
  {
    name: "Store",
    icon: (
      <>
        <path d="M8 6V2h14v4" fill="none" stroke="#2aa8e8" strokeWidth="2" />
        <path d="M1 6h28v19q0 4-4 4H5q-4 0-4-4z" fill="#f2f2f2" />
        <path d="M9 11h5v5H9z" fill="#f25022" /><path d="M16 11h5v5h-5z" fill="#7fba00" />
        <path d="M9 18h5v5H9z" fill="#00a4ef" /><path d="M16 18h5v5h-5z" fill="#ffb900" />
      </>
    ),
  },
  {
    name: "Mail",
    icon: (
      <>
        <path d="M0 10L15 1l15 9v18H0z" fill="#0a5cab" />
        <path d="M0 10l15 9 15-9v18H0z" fill="#28a8ea" />
        <path d="M3 10h24l-12 9z" fill="#f4f4f4" />
        <path d="M15 19l15 9H0z" fill="#1a98e0" />
      </>
    ),
  },
  {
    name: "App",
    icon: (
      <>
        <circle cx="15" cy="15" r="15" fill="#fff" />
        <path d="M11 24l-3-2V13l7-8 7 8v9l-3 2" stroke="#202020" strokeWidth="2.2" />
        <path d="M12 27V14l3-4 3 4v13" stroke="#202020" strokeWidth="1.4" />
      </>
    ),
  },
  { name: "Multisim", active: true, icon: null },
  {
    name: "Chrome",
    open: true,
    icon: (
      <>
        <circle cx="14" cy="16" r="13" fill="#fbc116" />
        <path d="M14 16L2.500 10A13 13 0 0 1 26 10H14z" fill="#ea4335" />
        <path d="M14 16L2.500 10A13 13 0 0 0 13 29z" fill="#34a853" />
        <circle cx="14" cy="16" r="6.5" fill="#fff" /><circle cx="14" cy="16" r="5" fill="#4285f4" />
      </>
    ),
  },
  {
    name: "Word",
    open: true,
    icon: (
      <>
        <rect x="7" y="1" width="22" height="27" rx="1" fill="#2b7cd3" />
        <path d="M7 1h22v7H7z" fill="#41a5ee" /><path d="M7 15h22v7H7z" fill="#185abd" /><path d="M7 22h22v6H7z" fill="#103f91" />
        <rect x="0" y="7" width="16" height="16" rx="1" fill="#185abd" />
        <text x="8" y="19" fontSize="12" fontWeight="bold" textAnchor="middle" fill="#fff" fontFamily="Liberation Sans">W</text>
      </>
    ),
  },
  {
    name: "WhatsApp",
    open: true,
    icon: (
      <>
        <path d="M15 1a14 14 0 1 1-7 26L1 29l2-7A14 14 0 0 1 15 1z" fill="#fff" />
        <path d="M15 3.500a11.500 11.500 0 1 1-6 21.500l-5 1.500L5.500 22A11.500 11.500 0 0 1 15 3.500z" fill="#2ad04e" />
        <path d="M10 8.500l2-.5 2 4-1.500 2q1.500 3 4.500 4l2-2 3.500 2-.5 2.500q-3 2.500-7 0-5-3-6.500-7-.5-3 1.500-5z" fill="#fff" />
      </>
    ),
  },
];

function Taskbar() {
  return (
    <div className="grid h-[60px] shrink-0 grid-cols-[1fr_auto_1fr] items-center bg-[#20211f] text-white">
      <span />
      <div className="flex gap-[7px] pl-0.5">
        {apps.map((a) => (
          <button
            key={a.name}
            type="button"
            aria-label={a.name}
            className={a.active ? "flex h-[50px] w-12 flex-col items-center rounded bg-[#30312f] pt-2.5" : "flex h-[50px] w-12 flex-col items-center pt-2.5"}
          >
            <span className="relative flex h-[30px] w-[30px] items-center justify-center">
              {a.active ? (
                <MultisimLogo size={28} />
              ) : (
                <svg width="30" height="30" viewBox="0 0 30 30" fill="none" aria-hidden="true">{a.icon}</svg>
              )}
              {a.name === "Chrome" && (
                <svg width="20" height="20" viewBox="0 0 20 20" className="absolute -top-[7px] left-[15px]" aria-hidden="true">
                  <circle cx="10" cy="10" r="9" fill="#b8aca0" stroke="#fff" />
                  <path d="M8 2c6-1 9 6 6 13l-3 3-1-6-3 1V8z" fill="#3a2a26" />
                  <path d="M6 8l4-1 1 5-3 2z" fill="#c89878" />
                </svg>
              )}
            </span>
            {a.active && <span className="mt-1.5 h-1 w-5 rounded-full bg-[#60c8f8]" />}
            {a.open && <span className="mt-1.5 h-1 w-2 rounded-full bg-[#9a9a9a]" />}
          </button>
        ))}
      </div>
      <div className="flex items-center justify-end pr-[23px] text-sm leading-5">
        <button type="button" aria-label="Hidden icons" className="mr-[11px]">
          <svg width="17" height="10" viewBox="0 0 17 10" fill="none"><path d="M1 9l7.500-8L16 9" stroke="#fff" strokeWidth="1.5" /></svg>
        </button>
        <svg width="21" height="14" viewBox="0 0 21 14" className="mr-[10px]" aria-hidden="true">
          <path d="M4 7a6 6 0 0 1 11-4l-4 5z" fill="#8c8c8c" />
          <path d="M5 14a4 4 0 0 1 0-9l5 1 7-1a4 4 0 0 1 0 9z" fill="#e8e8e8" />
        </svg>
        <svg width="19" height="17" viewBox="0 0 19 17" fill="#fff" className="mr-5" aria-hidden="true">
          <path d="M5 0l4 3-4 3-5-3zM14 0l5 3-5 3-4-3zM5 6.500l4 3-4 3-5-3zM14 6.500l5 3-5 3-4-3zM9.500 11l4 3-4 3-4-3z" />
        </svg>
        <div className="mr-[22px] text-center">ENG<br />IN</div>
        <svg width="21" height="16" viewBox="0 0 21 16" fill="none" stroke="#fff" strokeWidth="1.6" className="mr-2" aria-hidden="true">
          <path d="M1 6a13 13 0 0 1 19 0M3.500 9a10 10 0 0 1 14 0M6.500 12a6 6 0 0 1 8 0" />
          <circle cx="10.5" cy="14.5" r="1.5" fill="#fff" stroke="none" />
        </svg>
        <svg width="21" height="16" viewBox="0 0 21 16" fill="none" stroke="#fff" strokeWidth="1.4" className="mr-[9px]" aria-hidden="true">
          <path d="M1 5h3l4-4v14l-4-4H1zM11 5q2 3 0 6" />
          <path d="M14 3q4 5 0 10M17 1q5 7 0 14" stroke="#6a6a6a" />
        </svg>
        <svg width="21" height="14" viewBox="0 0 21 14" fill="none" className="mr-5" aria-hidden="true">
          <rect x="1" y="1" width="16" height="12" rx="2.5" stroke="#fff" strokeWidth="1.5" />
          <rect x="3" y="3.5" width="6" height="7" fill="#fff" />
          <path d="M18.500 5v4" stroke="#fff" strokeWidth="2" />
        </svg>
        <div className="text-right">21:12<br />27-10-2021</div>
      </div>
    </div>
  );
}

export default function App() {
  return (
    <div className="flex h-screen flex-col overflow-hidden bg-[#f0f0f0] font-['Open_Sans','Noto_Sans',sans-serif] text-black">
      <TitleBar />
      <MenuBar />
      <ToolbarRowOne />
      <ToolbarRowTwo />
      <div className="flex min-h-0 flex-1">
        <DesignToolbox />
        <DocumentArea />
        <Instruments />
      </div>
      <SpreadsheetView />
      <StatusBar />
      <Taskbar />
    </div>
  );
}
